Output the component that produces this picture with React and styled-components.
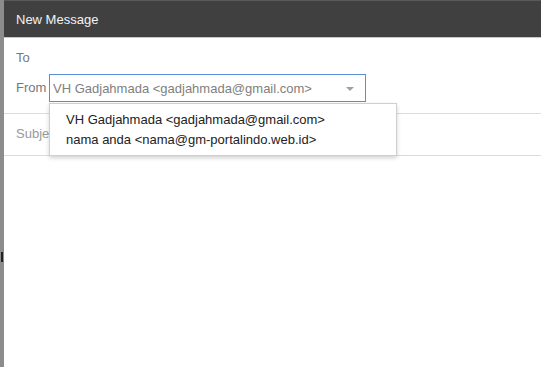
import styled, { createGlobalStyle } from "styled-components";

const GlobalStyle = createGlobalStyle`
    html, body {
        margin: 0;
        padding: 0;
        height: 100%;
        background: #8c8c8c;
        font-family: "Liberation Sans", Arial, sans-serif;
    }
    #root {
        height: 100%;
    }
`;

/**
 * Greyed page behind the dialog, only a sliver shows at the left
 */
const Backdrop = styled.div`
    position: relative;
    height: 367px;
    display: flex;
    padding-left: 4px;
    overflow: hidden;
`;

const BackdropGlyph = styled.div`
    position: absolute;
    left: 1px;
    top: 252px;
    width: 2px;
    height: 10px;
    background: #222;
`;

const Dialog = styled.div`
    position: relative;
    flex: 1;
    background: #fff;
    display: flex;
    flex-direction: column;
`;

const Header = styled.div`
    height: 36px;
    background: #404040;
    border-top: 1px solid #595959;
    border-bottom: 1px solid #c8c8c8;
    display: flex;
    align-items: center;
    padding-left: 12px;
    color: #f2f2f2;
    font-size: 13px;
`;

const Row = styled.div`
    box-sizing: border-box;
    display: flex;
    align-items: flex-start;
    height: ${(p) => p.$height}px;
    padding: ${(p) => p.$pad || 0}px 0 0 12px;
    border-bottom: ${(p) => (p.$divider ? "1px solid #dcdcdc" : "none")};
`;

const Label = styled.span`
    font-size: 13px;
    line-height: ${(p) => p.$line || 28}px;
    color: ${(p) => p.$color || "#777"};
    width: ${(p) => (p.$width ? p.$width + "px" : "auto")};
`;

const Select = styled.div`
    box-sizing: border-box;
    width: 317px;
    height: 28px;
    border: 1px solid #5a8ed8;
    display: flex;
    align-items: center;
    justify-content: space-between;
    padding: 0 11px 0 3px;
    font-size: 13px;
    color: #808080;
`;

const Caret = styled.span`
    width: 0;
    height: 0;
    border-left: 4px solid transparent;
    border-right: 4px solid transparent;
    border-top: 4px solid #a0a0a0;
    margin-top: 2px;
`;

const Menu = styled.div`
    position: absolute;
    left: 45px;
    top: 103px;
    box-sizing: border-box;
    width: 348px;
    height: 53px;
    background: #fff;
    border: 1px solid #cfcfcf;
    box-shadow: 0 2px 4px rgba(0, 0, 0, 0.18);
    padding-top: 6px;
`;

const MenuItem = styled.div`
    height: 20px;
    line-height: 20px;
    padding-left: 16px;
    font-size: 13px;
    color: #222;
`;

const accounts = [
    "VH Gadjahmada <gadjahmada@gmail.com>",
    "nama anda <nama@gm-portalindo.web.id>",
];

const App = () => {
    return (
        <>
            <GlobalStyle />
            <Backdrop>
                <BackdropGlyph />
                <Dialog>
                    <Header>New Message</Header>

                    <Row $height={36} $pad={6}>
                        <Label>To</Label>
                    </Row>

                    <Row $height={40} $divider>
                        <Label $width={33}>From</Label>
                        <Select>
                            <span>{accounts[0]}</span>
                            <Caret />
                        </Select>
                    </Row>

                    <Row $height={42} $pad={6} $divider>
                        <Label $color="#999">Subject</Label>
                    </Row>

                    <Menu>
                        {accounts.map((a) => (
                            <MenuItem key={a}>{a}</MenuItem>
                        ))}
                    </Menu>
                </Dialog>
            </Backdrop>
        </>
    );
};

export default App;
